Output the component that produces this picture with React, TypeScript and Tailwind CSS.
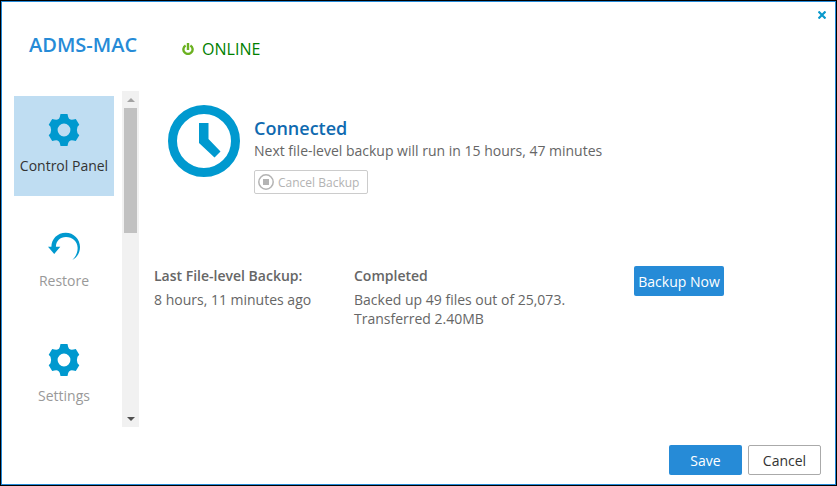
type IconProps = { className?: string };

function GearIcon({ className }: IconProps) {
  return (
    <svg viewBox="0 0 32 32" className={className} fill="currentColor" aria-hidden="true">
      <path
        fillRule="evenodd"
        d="M12.500 0h7l.7 3q.5 2 2.300 2.500 1.500.4 5.300-.4L31.300 10.800 29.500 12.800q-1.200 3.200 0 6.400L31.300 21.200 27.800 26.900q-3.800-.8-5.300-.4-1.800.5-2.300 2.500l-.7 3h-7l-.7-3q-.5-2-2.300-2.500-1.500-.4-5.300.4L.7 21.200 2.500 19.200q1.200-3.200 0-6.400L.7 10.800 4.200 5.100q3.800.8 5.300.4 1.800-.5 2.300-2.500zM16 9.600a6.400 6.400 0 1 0 0 12.800a6.400 6.400 0 1 0 0-12.800z"
      />
    </svg>
  );
}

function RestoreIcon({ className }: IconProps) {
  return (
    <svg viewBox="0 0 32 32" className={className} fill="currentColor" aria-hidden="true">
      <path d="M0 17.700h3.400C3.400 10 9.500 3.700 17.700 3.700 25.700 3.700 32 10 32 18c0 5.500-2.800 10.500-7.700 13 4.200-4 5.500-8.500 5.300-12.500C29.300 12.500 24.500 8 18 8 12 8 8 12 7.900 17.700H12.300L6.200 25z" />
    </svg>
  );
}

function ClockIcon({ className }: IconProps) {
  return (
    <svg viewBox="0 0 72 72" className={className} fill="currentColor" aria-hidden="true">
      <circle cx="36" cy="36" r="31.500" fill="none" stroke="currentColor" strokeWidth="9" />
      <path d="M31 18h9.500v16L52.500 46.500l-6 6L31 38z" />
    </svg>
  );
}

function PowerIcon({ className }: IconProps) {
  return (
    <svg viewBox="0 0 12 12" className={className} fill="none" stroke="currentColor" strokeWidth="2.400" aria-hidden="true">
      <path d="M3.600 2.400a4.600 4.600 0 1 0 4.800 0M6 0v7" />
    </svg>
  );
}

function StopIcon({ className }: IconProps) {
  return (
    <svg viewBox="0 0 16 16" className={className} aria-hidden="true">
      <circle cx="8" cy="8" r="7.200" fill="none" stroke="currentColor" strokeWidth="1.500" />
      <rect x="5" y="5" width="6" height="6" fill="currentColor" />
    </svg>
  );
}

function CloseIcon({ className }: IconProps) {
  return (
    <svg viewBox="0 0 8 8" className={className} stroke="currentColor" strokeWidth="2.200" aria-hidden="true">
      <path d="M.5.5l7 7M7.500.5l-7 7" />
    </svg>
  );
}

const sections = [
  { label: "Control Panel", Icon: GearIcon, active: true },
  { label: "Restore", Icon: RestoreIcon, active: false },
  { label: "Settings", Icon: GearIcon, active: false },
];

function Sidebar() {
  return (
    <div className="flex shrink-0 gap-2">
      <nav aria-label="Sections" className="flex flex-col gap-[15px] pt-[5px]">
        {sections.map(({ label, Icon, active }) => (
          <button
            key={label}
            type="button"
            aria-current={active ? "page" : undefined}
            className={
              active
                ? "flex size-[100px] flex-col items-center gap-[10px] bg-[#bfddf2] pt-[18px] text-[#333333]"
                : "flex size-[100px] flex-col items-center gap-[10px] pt-[18px] text-[#999999]"
            }
          >
            <Icon className="size-8 text-[#0099cf]" />
            <span className="whitespace-nowrap">{label}</span>
          </button>
        ))}
      </nav>
      <div aria-hidden="true" className="flex w-[17px] flex-col items-center bg-[#f1f1f1]">
        <span className="flex h-[17px] items-center">
          <svg viewBox="0 0 8 4" className="h-1 w-2 fill-[#a3a3a3]">
            <path d="M0 4L4 0l4 4z" />
          </svg>
        </span>
        <span className="h-[125px] w-[13px] bg-[#c1c1c1]" />
        <span className="mt-auto flex h-[17px] items-center">
          <svg viewBox="0 0 8 4" className="h-1 w-2 fill-[#505050]">
            <path d="M0 0l4 4 4-4z" />
          </svg>
        </span>
      </div>
    </div>
  );
}

export default function App() {
  return (
    <div className="min-h-screen bg-black p-px font-['Open_Sans','Noto_Sans',sans-serif] text-sm leading-5 text-[#666666]">
      <div className="flex min-h-[calc(100vh-2px)] flex-col border border-[#2489d8] bg-white">
        <header className="flex h-[89px] items-start pr-[9px] pl-[27px]">
          <h1 className="pt-[29px] text-xl leading-7 font-semibold text-[#268bd7]">ADMS-MAC</h1>
          <p className="ml-[45px] flex items-center gap-2 pt-[35px] text-base leading-6 text-[#008000]">
            <PowerIcon className="size-3 text-[#6bb120]" />
            ONLINE
          </p>
          <button type="button" aria-label="Close" className="mt-[9px] ml-auto text-[#0a99cc]">
            <CloseIcon className="size-2" />
          </button>
        </header>

        <div className="flex flex-1 pl-3">
          <Sidebar />
          <main className="flex-1 pt-[14px] pl-[15px]">
            <section className="flex gap-[14px] pl-[14px]">
              <ClockIcon className="size-[72px] shrink-0 text-[#0099cf]" />
              <div className="pt-[10px]">
                <h2 className="text-lg leading-[26px] font-semibold text-[#0f6ab0]">Connected</h2>
                <p>Next file-level backup will run in 15 hours, 47 minutes</p>
                <button
                  type="button"
                  disabled
                  className="mt-[9px] flex h-6 items-center gap-1 rounded-xs border border-[#cccccc] px-[3px] pr-2 text-xs text-[#b3b3b3]"
                >
                  <StopIcon className="size-4" />
                  <span className="pt-px">Cancel Backup</span>
                </button>
              </div>
            </section>

            <section className="mt-[72px] flex items-start">
              <div className="w-[200px] shrink-0">
                <h3 className="font-semibold">Last File-level Backup:</h3>
                <p className="mt-1 leading-[19px]">8 hours, 11 minutes ago</p>
              </div>
              <div className="w-[280px] shrink-0">
                <h3 className="font-semibold">Completed</h3>
                <p className="mt-1 leading-[19px]">
                  Backed up 49 files out of 25,073.
                  <br />
                  Transferred 2.40MB
                </p>
              </div>
              <button type="button" className="h-[30px] w-[90px] rounded-xs bg-[#268bd7] pt-0.5 whitespace-nowrap text-white">
                Backup Now
              </button>
            </section>
          </main>
        </div>

        <footer className="flex justify-end gap-[6px] pt-[18px] pr-[14px] pb-[9px]">
          <button type="button" className="h-[30px] w-[73px] rounded-xs bg-[#268bd7] pt-0.5 text-white">
            Save
          </button>
          <button type="button" className="h-[30px] w-[73px] rounded-xs border border-[#aaaaaa] pt-0.5 text-[#333333]">
            Cancel
          </button>
        </footer>
      </div>
    </div>
  );
}
